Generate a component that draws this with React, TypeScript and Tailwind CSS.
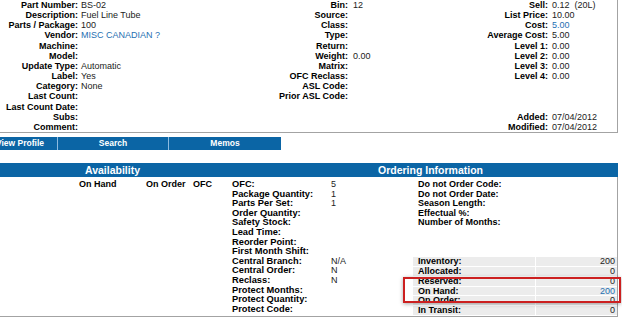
import React from 'react';

type Val = string | { link: string };

const topRows: [string, Val, string, Val, string, Val][] = [
  ['Part Number:', 'BS-02', 'Bin:', '12', 'Sell:', '0.12  (20L)'],
  ['Description:', 'Fuel Line Tube', 'Source:', '', 'List Price:', '10.00'],
  ['Parts / Package:', '100', 'Class:', '', 'Cost:', { link: '5.00' }],
  ['Vendor:', { link: 'MISC CANADIAN ?' }, 'Type:', '', 'Average Cost:', '5.00'],
  ['Machine:', '', 'Return:', '', 'Level 1:', '0.00'],
  ['Model:', '', 'Weight:', '0.00', 'Level 2:', '0.00'],
  ['Update Type:', 'Automatic', 'Matrix:', '', 'Level 3:', '0.00'],
  ['Label:', 'Yes', 'OFC Reclass:', '', 'Level 4:', '0.00'],
  ['Category:', 'None', 'ASL Code:', '', '', ''],
  ['Last Count:', '', 'Prior ASL Code:', '', '', ''],
  ['Last Count Date:', '', '', '', '', ''],
  ['Subs:', '', '', '', 'Added:', '07/04/2012'],
  ['Comment:', '', '', '', 'Modified:', '07/04/2012'],
];

const ofcRows: [string, string][] = [
  ['OFC:', '5'],
  ['Package Quantity:', '1'],
  ['Parts Per Set:', '1'],
  ['Order Quantity:', ''],
  ['Safety Stock:', ''],
  ['Lead Time:', ''],
  ['Reorder Point:', ''],
  ['First Month Shift:', ''],
  ['Central Branch:', 'N/A'],
  ['Central Order:', 'N'],
  ['Reclass:', 'N'],
  ['Protect Months:', ''],
  ['Protect Quantity:', ''],
  ['Protect Code:', ''],
];

const orderLabels = ['Do not Order Code:', 'Do not Order Date:', 'Season Length:', 'Effectual %:', 'Number of Months:'];

const inventory: [string, Val][] = [
  ['Inventory:', '200'],
  ['Allocated:', '0'],
  ['Reserved:', '0'],
  ['On Hand:', { link: '200' }],
  ['On Order:', '0'],
  ['In Transit:', '0'],
];

const V = ({ v }: { v: Val }) =>
  typeof v === 'string' ? <>{v}</> : <span className="text-[#1f6fb2]">{v.link}</span>;

export default function App() {
  return (
    <div className="relative w-[622px] h-[320px] overflow-hidden bg-white text-[9px] text-[#222] font-['Liberation_Sans',Arial,sans-serif]">
      {/* part details */}
      <div className="w-[618px] border-r border-b border-[#a3a3a3] grid grid-cols-[78px_190px_80px_120px_80px_1fr] leading-[10.15px] whitespace-pre">
        {topRows.map((r, i) => (
          <React.Fragment key={i}>
            <div className="text-right font-bold text-black">{r[0]}</div>
            <div className="pl-[3px]"><V v={r[1]} /></div>
            <div className="text-right font-bold text-black">{r[2]}</div>
            <div className="pl-[5px]"><V v={r[3]} /></div>
            <div className="text-right font-bold text-black">{r[4]}</div>
            <div className="pl-[4px]"><V v={r[5]} /></div>
          </React.Fragment>
        ))}
      </div>

      {/* tabs */}
      <div className="mt-[4px] flex h-[13px] w-[281px] bg-[#0b65a5] text-white font-bold text-[8.5px] leading-[13px]">
        <div className="w-[58px] overflow-hidden flex justify-end pr-[13px] border-r border-[#8dbbe0]">
          <span className="shrink-0 whitespace-nowrap">View Profile</span>
        </div>
        <div className="w-[111px] text-center border-r border-[#8dbbe0]">Search</div>
        <div className="flex-1 text-center">Memos</div>
      </div>

      {/* section headers */}
      <div className="mt-[13px] w-[618px] h-[14px] bg-[#0b65a5] text-white font-bold text-[10.5px] leading-[14px] flex">
        <div className="w-[225px] text-center">Availability</div>
        <div className="flex-1 text-center pl-[18px]">Ordering Information</div>
      </div>

      {/* lower section */}
      <div className="w-[618px] border-r border-b border-[#a3a3a3] flex pt-[3px] pb-[2px] leading-[9.6px]">
        <div className="w-[232px] flex items-start font-bold text-black">
          <span className="ml-[79px] w-[67px]">On Hand</span>
          <span className="w-[47px]">On Order</span>
          <span>OFC</span>
        </div>

        <div className="w-[181px] grid grid-cols-[99px_1fr] content-start">
          {ofcRows.map(([l, v]) => (
            <React.Fragment key={l}>
              <div className="font-bold text-black whitespace-nowrap text-[9.3px]">{l}</div>
              <div>{v}</div>
            </React.Fragment>
          ))}
        </div>

        <div className="flex-1 flex flex-col">
          {orderLabels.map(l => (
            <div key={l} className="pl-[5px] font-bold text-black">{l}</div>
          ))}
          <div className="h-[28.8px]" />
          {inventory.map(([l, v], i) => (
            <div key={l} className={`grid grid-cols-[122px_1fr] gap-x-px h-[9.6px] ${i > 0 ? 'border-t border-white' : ''}`}>
              <div className="bg-[#ececec] pl-[5px] font-bold text-black leading-[9px]">{l}</div>
              <div className="bg-[#ececec] text-right pr-[2px] leading-[9px]"><V v={v} /></div>
            </div>
          ))}
        </div>
      </div>

      {/* highlight box */}
      <div className="absolute left-[403px] top-[277px] w-[218px] h-[26px] border-2 border-[#cc2020] shadow-[0_1px_4px_rgba(0,0,0,0.35)]" />
    </div>
  );
}
